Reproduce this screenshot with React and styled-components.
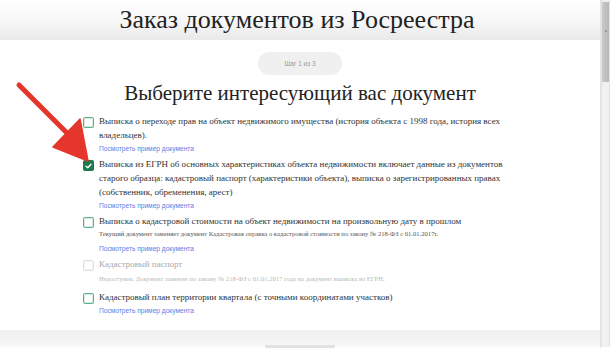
import React from "react";
import styled, { createGlobalStyle } from "styled-components";

const GlobalStyle = createGlobalStyle`
  html, body { margin: 0; padding: 0; background: #fff; overflow: hidden; }
  * { box-sizing: border-box; }
`;

const Frame = styled.div`
  width: 612px;
  height: 348px;
  display: flex;
  background: #fff;
`;

const Main = styled.div`
  position: relative;
  width: 601px;
  height: 348px;
  display: flex;
  flex-direction: column;
  border-right: 1px solid #e4e4e4;
`;

const Header = styled.header`
  height: 40px;
  flex: none;
  display: flex;
  align-items: center;
  justify-content: center;
  background: linear-gradient(to bottom, #ffffff 0%, #f7f7f7 55%, #e9e9e9 100%);
`;

const Title = styled.h1`
  margin: 0 6px 0 0;
  font-family: "Liberation Serif", serif;
  font-weight: 400;
  font-size: 26px;
  line-height: 30px;
  color: #222;
`;

const Content = styled.main`
  flex: 1;
  display: flex;
  flex-direction: column;
  align-items: center;
`;

const Pill = styled.div`
  margin-top: 12px;
  width: 84px;
  height: 23px;
  border-radius: 12px;
  background: #f0f0f0;
  display: flex;
  align-items: center;
  justify-content: center;
  font-family: "Liberation Sans", sans-serif;
  font-size: 6.5px;
  color: #999;
`;

const Heading = styled.h2`
  margin: 6px 0 0;
  font-family: "Liberation Serif", serif;
  font-weight: 400;
  font-size: 21px;
  line-height: 24px;
  color: #222;
`;

const List = styled.div`
  align-self: stretch;
  margin-top: 9px;
  padding-left: 83px;
  display: flex;
  flex-direction: column;
  gap: 1px;
`;

const Item = styled.div`
  display: grid;
  grid-template-columns: 11px 1fr;
  column-gap: 5px;
  margin-top: ${(p) => p.$extra || 0}px;
`;

const Box = styled.span`
  margin-top: 3px;
  width: 11px;
  height: 11px;
  border-radius: 1.5px;
  border: 1px solid ${(p) => (p.$disabled ? "#dedede" : p.$checked ? "#1d7a4f" : "#5fb189")};
  box-shadow: inset 0 0 0 0.5px ${(p) => (p.$disabled ? "#ececec" : p.$checked ? "#1d7a4f" : "#a8d5bd")};
  background: ${(p) => (p.$checked ? "#1d7a4f" : "#fff")};
  display: flex;
  align-items: center;
  justify-content: center;
`;

const Body = styled.div`
  display: flex;
  flex-direction: column;
`;

const Label = styled.div`
  font-family: "Liberation Serif", serif;
  font-size: 9px;
  line-height: 14px;
  color: ${(p) => (p.$disabled ? "#a9a9a9" : "#333")};
  white-space: nowrap;
`;

const Sub = styled.div`
  margin-top: ${(p) => p.$mt || 0}px;
  font-family: "Liberation Serif", serif;
  font-size: 6.6px;
  line-height: 11px;
  color: ${(p) => (p.$disabled ? "#b8b8b8" : "#555")};
  white-space: nowrap;
`;

const DocLink = styled.a`
  margin-top: ${(p) => p.$mt || 0}px;
  font-family: "Liberation Sans", sans-serif;
  font-size: 6.6px;
  line-height: 14px;
  color: #5b80e6;
  text-decoration: none;
  white-space: nowrap;
`;

const Footer = styled.footer`
  height: 18px;
  flex: none;
  display: flex;
  align-items: flex-end;
  justify-content: center;
  background: linear-gradient(to bottom, #f0f0f0 0%, #f5f5f5 80%, #fff 100%);
`;

const FooterTab = styled.div`
  width: 70px;
  height: 3px;
  background: #e2e2e2;
`;

const Track = styled.div`
  position: relative;
  width: 9px;
  height: 347px;
  background: #f1f1f1;
  border-left: 1px solid #e2e2e2;
  border-right: 1px solid #e2e2e2;
`;

const Thumb = styled.div`
  margin-top: 2px;
  width: 100%;
  height: 80px;
  background: linear-gradient(to right, #c9c9c9, #b9b9b9);
  display: flex;
  justify-content: center;
  padding-top: 28px;
`;

const Dot = styled.span`
  width: 2px;
  height: 2px;
  border-radius: 1px;
  background: #8a8a8a;
`;

const ArrowLayer = styled.svg`
  position: absolute;
  left: 0;
  top: 0;
  pointer-events: none;
`;

const Check = () => (
  <svg width="7" height="6" viewBox="0 0 7 6">
    <path d="M1 3.2 L2.8 4.8 L6 1.2" fill="none" stroke="#fff" strokeWidth="1.4" strokeLinecap="round" strokeLinejoin="round" />
  </svg>
);

const LINK = "Посмотреть пример документа";

export default function App() {
  return (
    <>
      <GlobalStyle />
      <Frame>
        <Main>
          <Header>
            <Title>Заказ документов из Росреестра</Title>
          </Header>
          <Content>
            <Pill>Шаг 1 из 3</Pill>
            <Heading>Выберите интересующий вас документ</Heading>
            <List>
              <Item>
                <Box />
                <Body>
                  <Label>
                    Выписка о переходе прав на объект недвижимого имущества (история объекта с 1998 года, история всех
                    <br />
                    владельцев).
                  </Label>
                  <DocLink href="#">{LINK}</DocLink>
                </Body>
              </Item>
              <Item>
                <Box $checked>
                  <Check />
                </Box>
                <Body>
                  <Label>
                    Выписка из ЕГРН об основных характеристиках объекта недвижимости включает данные из документов
                    <br />
                    старого образца: кадастровый паспорт (характеристики объекта), выписка о зарегистрированных правах
                    <br />
                    (собственник, обременения, арест)
                  </Label>
                  <DocLink href="#">{LINK}</DocLink>
                </Body>
              </Item>
              <Item>
                <Box />
                <Body>
                  <Label>Выписка о кадастровой стоимости на объект недвижимости на произвольную дату в прошлом</Label>
                  <Sub>
                    Текущий документ заменяет документ Кадастровая справка о кадастровой стоимости по закону № 218-ФЗ с 01.01.2017г.
                  </Sub>
                  <DocLink href="#" $mt={3}>{LINK}</DocLink>
                </Body>
              </Item>
              <Item>
                <Box $disabled />
                <Body>
                  <Label $disabled>Кадастровый паспорт</Label>
                  <Sub $disabled $mt={2}>
                    Недоступен. Документ заменен по закону № 218-ФЗ с 01.01.2017 года на документ выписка из ЕГРН.
                  </Sub>
                </Body>
              </Item>
              <Item $extra={5}>
                <Box />
                <Body>
                  <Label>Кадастровый план территории квартала (с точными координатами участков)</Label>
                  <DocLink href="#">{LINK}</DocLink>
                </Body>
              </Item>
            </List>
          </Content>
          <Footer>
            <FooterTab />
          </Footer>
          <ArrowLayer width="100" height="170" viewBox="0 0 100 170">
            <line x1="19" y1="85" x2="68" y2="134" stroke="#e5362b" strokeWidth="5" strokeLinecap="round" />
            <polygon points="53,147 80,119 88,161" fill="#e5362b" stroke="#e5362b" strokeWidth="1.5" strokeLinejoin="round" />
          </ArrowLayer>
        </Main>
        <Track>
          <Thumb>
            <Dot />
          </Thumb>
        </Track>
      </Frame>
    </>
  );
}
